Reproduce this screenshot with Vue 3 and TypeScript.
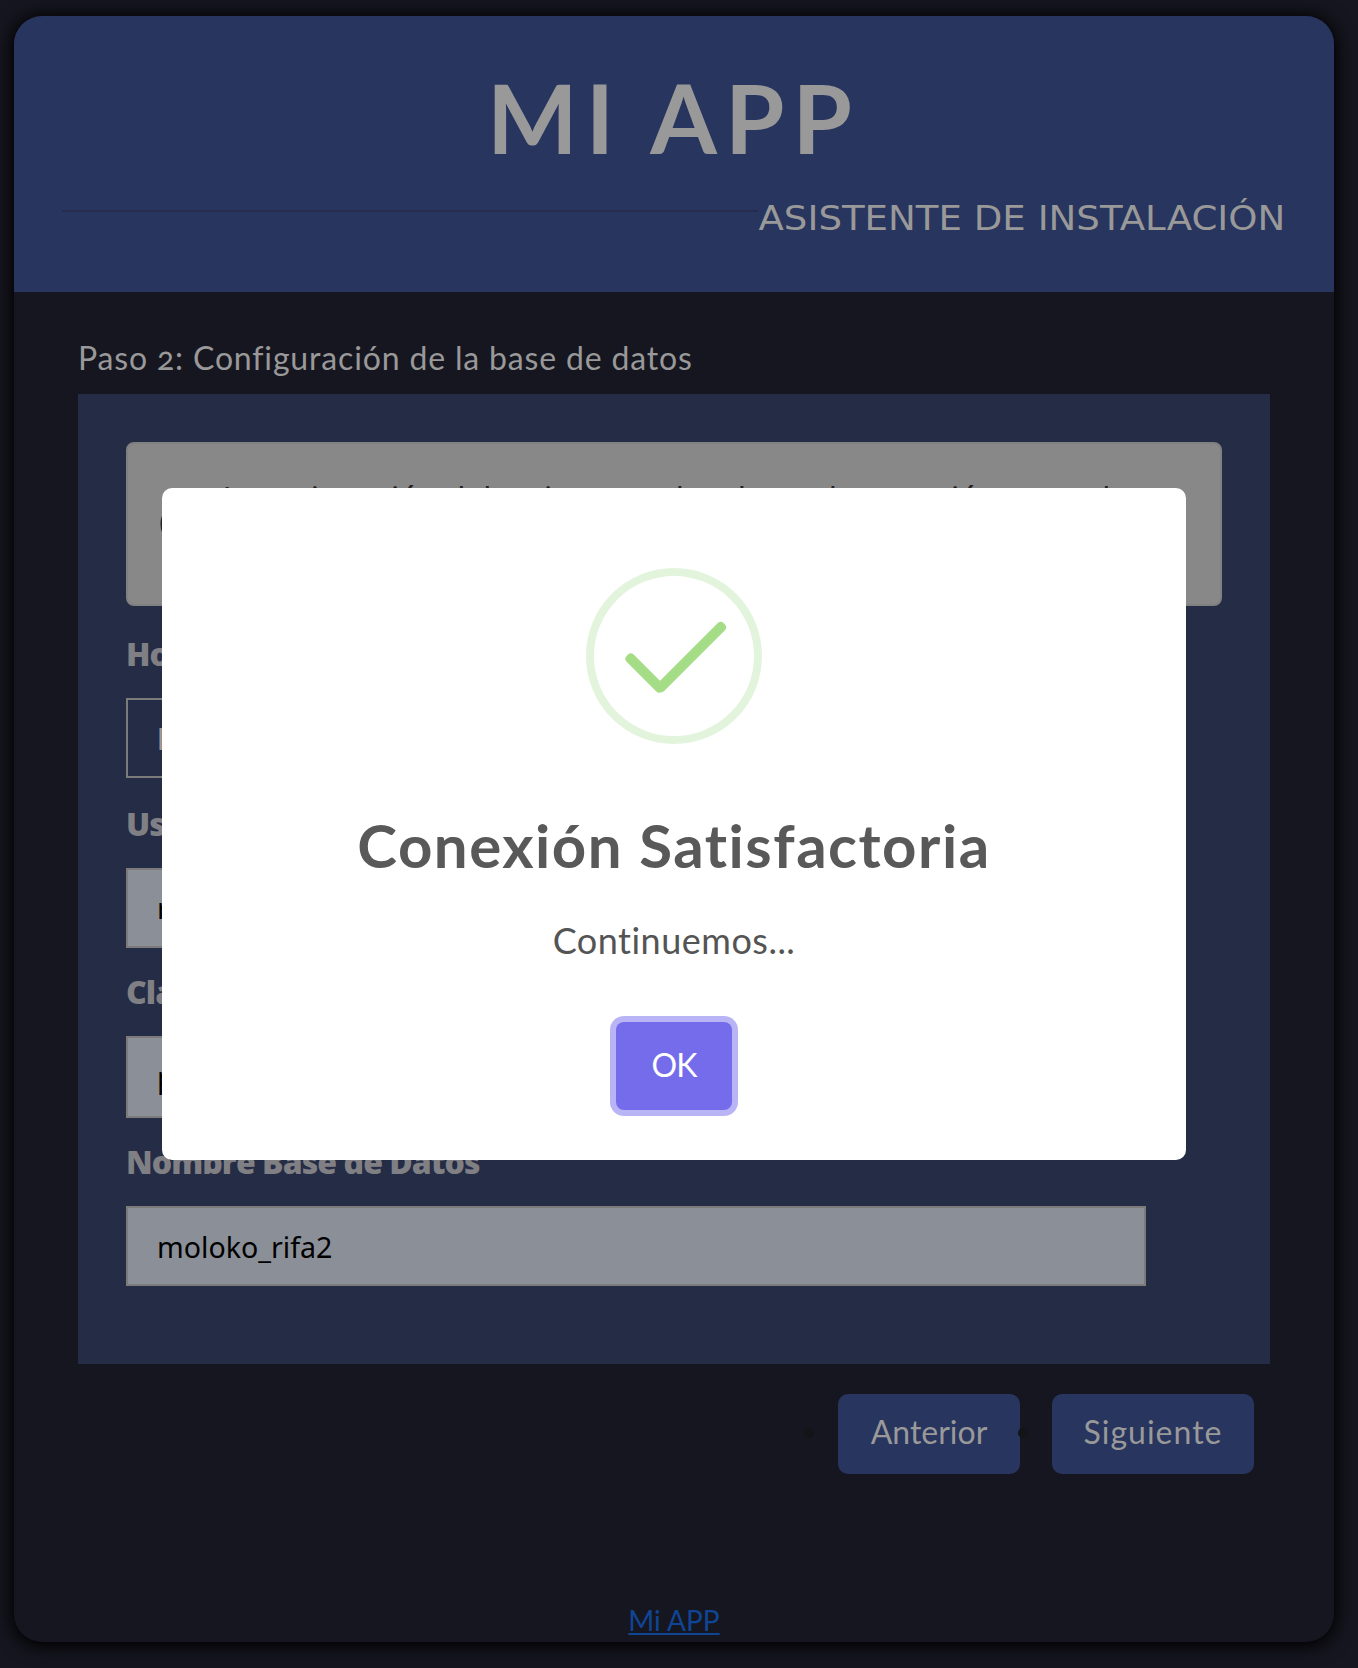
<script setup lang="ts">
interface Field {
  label: string
  value: string
  kind: string
}

const fields: Field[] = [
  { label: 'Host', value: 'localhost', kind: 'plain' },
  { label: 'Usuario', value: 'root', kind: 'filled raised' },
  { label: 'Clave', value: 'password', kind: 'filled tall' },
  { label: 'Nombre Base de Datos', value: 'moloko_rifa2', kind: 'filled' },
]
</script>

<template>
  <div class="page">
    <main class="card">
      <header class="header">
        <h1 class="title">MI APP</h1>
        <div class="subtitle-row">
          <span class="rule"></span>
          <span class="subtitle">ASISTENTE DE INSTALACIÓN</span>
        </div>
      </header>
      <section class="content">
        <h2 class="step">Paso 2: Configuración de la base de datos</h2>
        <div class="panel">
          <div class="notice">
            <svg class="info" viewBox="0 0 48 48" width="48" height="48">
              <circle cx="24" cy="24" r="22" fill="none" stroke="#222" stroke-width="3" />
              <path d="M24 21v13M24 13v4" stroke="#222" stroke-width="4" />
            </svg>
            <p>A continuación debes ingresar los datos de conexión a esta base</p>
          </div>
          <div v-for="field in fields" :key="field.label" class="field">
            <label>{{ field.label }}</label>
            <div class="input" :class="field.kind">{{ field.value }}</div>
          </div>
        </div>
        <ul class="actions">
          <li><a class="btn prev">Anterior</a></li>
          <li><a class="btn next">Siguiente</a></li>
        </ul>
      </section>
      <footer class="footer"><a>Mi APP</a></footer>
    </main>

    <div class="overlay">
      <div class="modal" role="dialog">
        <svg class="icon" viewBox="0 0 176 176" width="176" height="176">
          <circle cx="88" cy="88" r="84" fill="none" stroke="#e3f4dc" stroke-width="8" />
          <g fill="#a5dc86">
            <rect x="34" y="100" width="50" height="10" rx="4" transform="rotate(45 59 105)" />
            <rect x="58" y="84" width="94" height="10" rx="4" transform="rotate(-45 105 89)" />
          </g>
        </svg>
        <h2 class="modal-title">Conexión Satisfactoria</h2>
        <p class="modal-text">Continuemos...</p>
        <button class="confirm">OK</button>
      </div>
    </div>
  </div>
</template>

<style>
body {
  margin: 0;
  background: #161620;
}
</style>

<style scoped>
.page {
  box-sizing: border-box;
  height: 1668px;
  padding: 16px 24px 26px 14px;
  overflow: hidden;
  background: #161620;
  font-family: Lato, 'Open Sans', sans-serif;
}
.card {
  display: flex;
  flex-direction: column;
  height: 1626px;
  border-radius: 28px;
  overflow: hidden;
  background: #161620;
  box-shadow: 0 2px 18px 3px #000;
}
.header {
  box-sizing: border-box;
  height: 276px;
  padding: 51px 49px 0 48px;
  background: #28355e;
}
.title {
  margin: 0;
  font-size: 96px;
  line-height: 100px;
  font-weight: 700;
  letter-spacing: 8px;
  text-align: center;
  color: #999;
}
.subtitle-row {
  display: flex;
  align-items: flex-start;
  margin-top: 32px;
}
.rule {
  flex: 1;
  height: 2px;
  margin-top: 11px;
  background: #262c50;
}
.subtitle {
  margin-left: 59px;
  font-family: 'DejaVu Sans', sans-serif;
  font-size: 33px;
  line-height: 40px;
  color: #999;
  transform: scaleX(1.125);
  transform-origin: right;
}
.content {
  flex: 1;
  padding: 42px 64px 0;
}
.step {
  margin: 0 0 12px;
  font-size: 32px;
  line-height: 48px;
  font-weight: 400;
  font-variant-numeric: oldstyle-nums;
  letter-spacing: 0.84px;
  color: #999;
}
.panel {
  box-sizing: border-box;
  height: 970px;
  padding: 48px;
  background: #252c46;
}
.notice {
  display: flex;
  align-items: flex-start;
  gap: 9px;
  box-sizing: border-box;
  height: 164px;
  margin-bottom: 28px;
  padding: 29px 0 0 32px;
  border: 2px solid #808080;
  border-radius: 8px;
  background: #888;
}
.info {
  flex: none;
  margin-top: 27px;
}
.notice p {
  margin: 0;
  font: 31.65px/48px 'Noto Sans', sans-serif;
  white-space: nowrap;
  color: #222;
}
.field + .field {
  margin-top: 24px;
}
.field:nth-child(3) {
  margin-top: 26px;
}
label {
  display: block;
  margin-bottom: 24px;
  font-family: 'Open Sans', Lato, sans-serif;
  font-size: 32px;
  line-height: 40px;
  font-weight: 800;
  letter-spacing: -0.95px;
  color: #808084;
}
.input {
  box-sizing: border-box;
  width: 1020px;
  height: 80px;
  padding: 0 29px;
  border: 2px solid #7c7b79;
  font: 28.6px/78px 'Noto Sans', sans-serif;
  color: #000;
}
.plain {
  color: #9f9698;
}
.filled {
  background: #8b8f98;
}
.raised {
  line-height: 75px;
}
.tall {
  height: 82px;
  line-height: 78px;
}
.actions {
  display: flex;
  justify-content: flex-end;
  gap: 32px;
  margin: 30px 16px 0 0;
  padding: 0;
  list-style: none;
}
.actions li {
  position: relative;
}
.actions li::before {
  content: '';
  position: absolute;
  left: -34px;
  top: 34px;
  width: 10px;
  height: 10px;
  border-radius: 50%;
  background: #131417;
}
.btn {
  display: block;
  box-sizing: border-box;
  height: 80px;
  border-radius: 10px;
  background: #28355e;
  font-size: 32px;
  line-height: 76px;
  text-align: center;
  color: #999;
}
.prev {
  width: 182px;
}
.next {
  width: 202px;
  letter-spacing: 1px;
}
.footer {
  height: 40px;
  font-size: 28px;
  line-height: 36px;
  text-align: center;
}
.footer a {
  color: #0f4593;
  text-decoration: underline;
  text-decoration-thickness: 2px;
  text-underline-offset: 2px;
}
.overlay {
  position: absolute;
  inset: 488px 172px auto 162px;
}
.modal {
  display: flex;
  flex-direction: column;
  align-items: center;
  box-sizing: border-box;
  height: 672px;
  padding-top: 80px;
  border-radius: 10px;
  background: #fff;
}
.modal-title {
  margin: 65px 0 0;
  font-size: 60px;
  line-height: 72px;
  font-weight: 700;
  letter-spacing: 1.5px;
  color: #595959;
}
.modal-text {
  margin: 35px 0 0;
  font-size: 36px;
  line-height: 48px;
  letter-spacing: 0.5px;
  color: #545454;
}
.confirm {
  width: 116px;
  height: 88px;
  margin-top: 58px;
  padding: 0 0 2px;
  border: 0;
  border-radius: 8px;
  background: #756cec;
  box-shadow: 0 0 0 6px #b9b4f5;
  font: 32px/80px Lato, sans-serif;
  letter-spacing: -0.8px;
  color: #fff;
}
</style>
